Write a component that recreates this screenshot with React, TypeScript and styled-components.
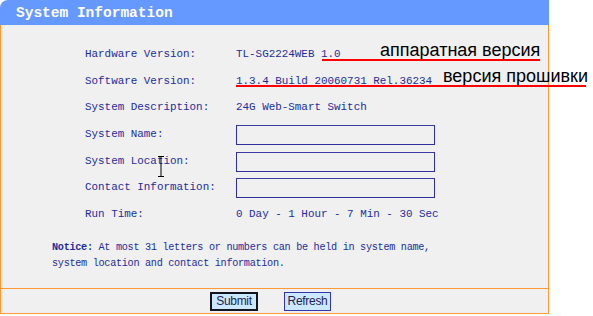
import React from "react";
import styled, { createGlobalStyle } from "styled-components";

const Global = createGlobalStyle`
  html, body { margin: 0; padding: 0; background: #ffffff; }
  body { font-family: "Liberation Mono", monospace; }
`;

const Stage = styled.div`
  position: relative;
  width: 593px;
  height: 316px;
  overflow: hidden;
`;

const Panel = styled.div`
  width: 549px;
  display: flex;
  flex-direction: column;
`;

const Header = styled.div`
  height: 25px;
  background: #6699ff;
  border-top-left-radius: 8px;
  display: flex;
  align-items: center;
  padding-left: 16px;
  color: #ffffff;
  font-family: "Liberation Mono", monospace;
  font-weight: bold;
  font-size: 14.5px;
`;

const Body = styled.div`
  background: #f0f0f0;
  border-left: 1px solid #ff9933;
  border-right: 1px solid #ff9933;
  border-bottom: 1px solid #ff9933;
  padding: 16px 0 0 0;
  height: 264px;
  box-sizing: border-box;
  display: flex;
  flex-direction: column;
`;

const Grid = styled.div`
  display: grid;
  grid-template-columns: 151px 1fr;
  grid-auto-rows: 26.6px;
  padding-left: 84px;
  color: #1d2c9c;
  font-size: 10.9px;
  align-items: center;
`;

const Label = styled.div`
  white-space: pre;
`;

const Value = styled.div`
  white-space: pre;
`;

const TextInput = styled.input`
  width: 199px;
  height: 20px;
  box-sizing: border-box;
  margin: 2px 0 0 0;
  background: #f0f0f0;
  border: 1px solid #2e2e9e;
  border-top-color: #3a3aa6;
  padding: 0 3px;
  outline: none;
  font-family: "Liberation Mono", monospace;
`;

const Notice = styled.p`
  margin: 13px 0 0 51px;
  color: #1d2c9c;
  font-size: 10.2px;
  letter-spacing: -0.3px;
  line-height: 15.6px;
  b { font-weight: bold; }
`;

const Footer = styled.div`
  height: 25px;
  box-sizing: border-box;
  background: #f0f0f0;
  border-left: 1px solid #ff9933;
  border-right: 1px solid #ff9933;
  border-bottom: 1px solid #ff9933;
  display: flex;
  align-items: center;
  justify-content: center;
  gap: 26px;
  padding-right: 8px;
`;

const Button = styled.button<{ $primary?: boolean }>`
  height: 19px;
  width: ${(p) => (p.$primary ? "48px" : "47px")};
  box-sizing: border-box;
  padding: 0;
  background: #cce8ff;
  border: ${(p) => (p.$primary ? "2px solid #14141e" : "1px solid #3333aa")};
  color: #1e1e50;
  font-family: "Liberation Sans", Arial, sans-serif;
  font-size: 12px;
  letter-spacing: -0.3px;
`;

const Annotation = styled.div<{ $x: number; $y: number }>`
  position: absolute;
  left: ${(p) => p.$x}px;
  top: ${(p) => p.$y}px;
  font-family: "Liberation Sans", Arial, sans-serif;
  font-size: 18px;
  color: #000000;
  white-space: nowrap;
  line-height: 20px;
`;

const RedLine = styled.div<{ $x: number; $y: number; $w: number }>`
  position: absolute;
  left: ${(p) => p.$x}px;
  top: ${(p) => p.$y}px;
  width: ${(p) => p.$w}px;
  height: 2px;
  background: #ff0000;
`;

const Cursor = styled.svg`
  position: absolute;
  left: 157px;
  top: 156px;
`;

const rows: { label: string; value?: string; input?: boolean }[] = [
  { label: "Hardware Version:", value: "TL-SG2224WEB 1.0" },
  { label: "Software Version:", value: "1.3.4 Build 20060731 Rel.36234" },
  { label: "System Description:", value: "24G Web-Smart Switch" },
  { label: "System Name:", input: true },
  { label: "System Location:", input: true },
  { label: "Contact Information:", input: true },
  { label: "Run Time:", value: "0 Day - 1 Hour - 7 Min - 30 Sec" },
];

export default function App() {
  return (
    <Stage>
      <Global />
      <Panel>
        <Header>System Information</Header>
        <Body>
          <Grid>
            {rows.map((r) => (
              <React.Fragment key={r.label}>
                <Label>{r.label}</Label>
                {r.input ? <TextInput type="text" /> : <Value>{r.value}</Value>}
              </React.Fragment>
            ))}
          </Grid>
          <Notice>
            <b>Notice:</b> At most 31 letters or numbers can be held in system name,
            <br />
            system location and contact information.
          </Notice>
        </Body>
        <Footer>
          <Button $primary>Submit</Button>
          <Button>Refresh</Button>
        </Footer>
      </Panel>
      <Annotation $x={380} $y={40}>аппаратная версия</Annotation>
      <RedLine $x={322} $y={59} $w={218} />
      <Annotation $x={443} $y={66}>версия прошивки</Annotation>
      <RedLine $x={236} $y={85} $w={350} />
      <Cursor width="8" height="21" viewBox="0 0 8 21">
        <path d="M1 0.5h6M4 1v19M1 20.5h6" stroke="#000" strokeWidth="1" fill="none" />
      </Cursor>
    </Stage>
  );
}
